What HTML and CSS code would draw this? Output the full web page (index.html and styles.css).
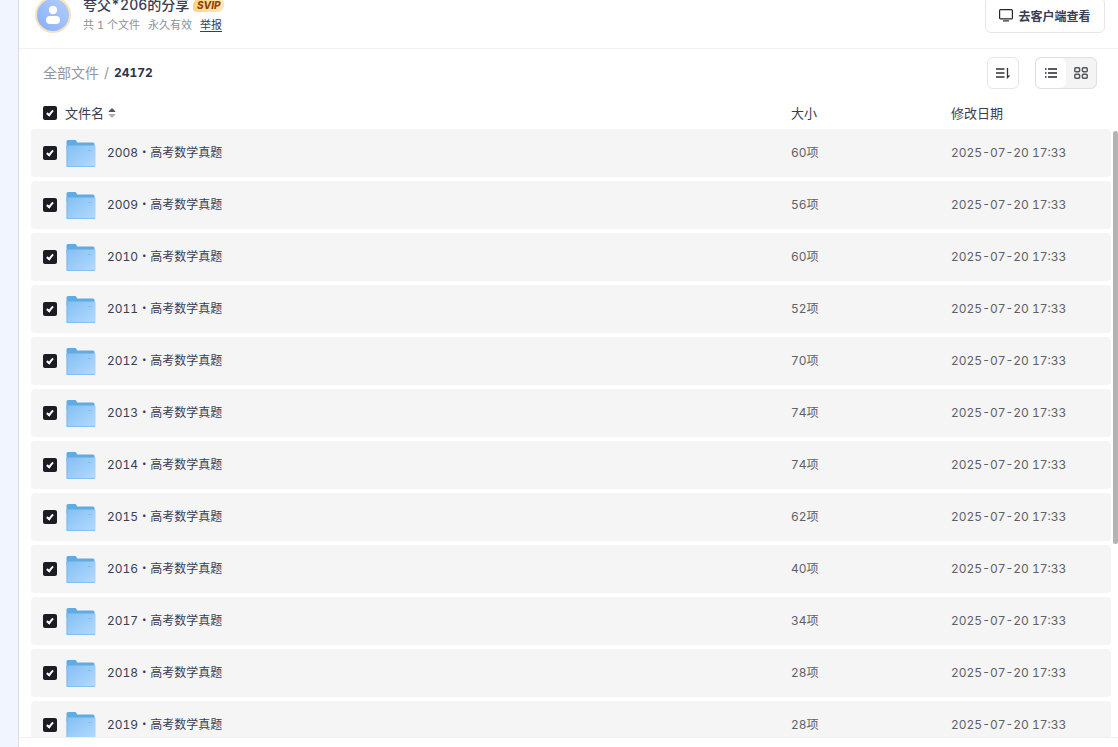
FILE: index.html
```html
<!DOCTYPE html>
<html lang="zh-CN">
<head>
    <meta charset="UTF-8">
    <meta name="viewport" content="width=device-width, initial-scale=1.0">
    <title>夸父*206的分享</title>
    <link rel="stylesheet" href="styles.css">
</head>
<body>
    <svg class="defs" aria-hidden="true">
        <defs>
            <linearGradient id="folder-front" x1="0" y1="0" x2="1" y2="1">
                <stop offset="0" stop-color="#84bff2"/>
                <stop offset="1" stop-color="#b3daff"/>
            </linearGradient>
            <symbol id="folder" viewBox="0 0 30 28">
                <path d="M.5 2.500Q.5 1 2 1H9Q10 1 10.500 2L11 3.500H27Q28.500 3.500 28.500 5V10H.5Z" fill="#61abe2"/>
                <path d="M.5 7.500Q.5 6.500 1.500 6.500H28.500Q29.500 6.500 29.500 7.500V27Q29.500 28 28.500 28H1.500Q.5 28 .5 27Z" fill="url(#folder-front)"/>
                <path d="M1 7V27.500H29" fill="none" stroke="#6db0e8" stroke-opacity=".6"/>
                <path d="M22 11.500H25.500" stroke="#86bdec"/>
            </symbol>
        </defs>
    </svg>
    <div class="page">
        <header class="header">
            <svg class="avatar" viewBox="0 0 36 36">
                <defs>
                    <linearGradient id="avatar-bg" x1="0" y1="1" x2="1" y2="0">
                        <stop offset="0" stop-color="#86adfa"/>
                        <stop offset="1" stop-color="#b6cffb"/>
                    </linearGradient>
                </defs>
                <circle cx="18" cy="18" r="17" fill="url(#avatar-bg)" stroke="#f7e2bd" stroke-width="2"/>
                <circle cx="18" cy="13" r="4.200" fill="#fff"/>
                <rect x="11" y="19" width="14" height="8" rx="4" fill="#fff"/>
            </svg>
            <div class="share">
                <div class="share-title">夸父*206的分享 <span class="svip">SVIP</span></div>
                <div class="share-info">
                    <span>共 1 个文件</span>
                    <span>永久有效</span>
                    <a href="#">举报</a>
                </div>
            </div>
            <button class="client-btn" type="button">
                <svg width="14" height="14" viewBox="0 0 14 14" fill="none" stroke="#25262d" stroke-width="1.200">
                    <rect x=".6" y="1.600" width="12.800" height="9.300" rx="1"/>
                    <path d="M4 12.900H10"/>
                </svg>
                去客户端查看
            </button>
        </header>
        <div class="toolbar">
            <nav class="crumbs">
                <a href="#">全部文件</a>
                <span class="slash">/</span>
                <strong>24172</strong>
            </nav>
            <button class="sort-btn" type="button" aria-label="排序">
                <svg width="14" height="12" viewBox="0 0 14 12" fill="none" stroke="#333" stroke-width="1.300">
                    <path d="M0 2H8.500M0 6H8.500M0 10H8.500M11.500 1V10.500L13.500 8.500"/>
                </svg>
            </button>
            <div class="views">
                <button class="view active" type="button" aria-label="列表">
                    <svg width="12" height="10" viewBox="0 0 12 10" fill="none" stroke="#25262d" stroke-width="1.300">
                        <path d="M0 1H1.500M3 1H12M0 5H1.500M3 5H12M0 9H1.500M3 9H12"/>
                    </svg>
                </button>
                <button class="view" type="button" aria-label="网格">
                    <svg width="14" height="12" viewBox="0 0 14 12" fill="none" stroke="#55565c" stroke-width="1.500">
                        <rect x=".8" y=".8" width="4.800" height="4" rx="1"/>
                        <rect x="8.400" y=".8" width="4.800" height="4" rx="1"/>
                        <rect x=".8" y="7.200" width="4.800" height="4" rx="1"/>
                        <rect x="8.400" y="7.200" width="4.800" height="4" rx="1"/>
                    </svg>
                </button>
            </div>
        </div>
        <div class="list">
            <table class="files">
                <thead>
                    <tr>
                        <th class="name">
                            <input type="checkbox" id="all" checked>
                            <label for="all">文件名</label>
                            <svg class="sorter" width="8" height="10" viewBox="0 0 8 10">
                                <path d="M1 4Q0 4 1 3L3.400 .5Q4 0 4.600 .5L7 3Q8 4 7 4Z" fill="#55565c"/>
                                <path d="M1 6Q0 6 1 7L3.400 9.500Q4 10 4.600 9.500L7 7Q8 6 7 6Z" fill="#b0b1b5"/>
                            </svg>
                        </th>
                        <th class="size">大小</th>
                        <th class="date">修改日期</th>
                    </tr>
                </thead>
                <tbody id="rows"></tbody>
            </table>
            <div class="scroll-thumb"></div>
        </div>
        <footer class="footer"></footer>
    </div>
    <script>
        const counts = [60, 56, 60, 52, 70, 74, 74, 62, 40, 34, 28, 28];
        const rows = document.getElementById('rows');

        // 从 2008 年开始，每年一个文件夹
        counts.forEach((count, i) => {
            const year = 2008 + i;
            const row = document.createElement('tr');
            row.innerHTML = `
                <td class="name">
                    <input type="checkbox" id="f${year}" checked>
                    <svg class="folder"><use href="#folder"/></svg>
                    <label for="f${year}">${year}・高考数学真题</label>
                </td>
                <td class="size">${count}项</td>
                <td class="date">2025-07-20 17:33</td>
            `;
            rows.appendChild(row);
        });
    </script>
</body>
</html>
```
FILE: styles.css
```css
* {
    box-sizing: border-box;
}

body {
    margin: 0;
    height: 100vh;
    overflow: hidden;
    display: flex;
    font-family: Inter, "Noto Sans CJK SC", sans-serif;
    font-size: 12px;
    line-height: 18px;
    font-variant-numeric: tabular-nums;
    color: #3b3d52;
    background-color: #f1f5ff;
}

button {
    font-family: inherit;
    cursor: pointer;
    display: flex;
    align-items: center;
    justify-content: center;
    padding: 0;
    background-color: #fff;
    border: 1px solid #e5e6e8;
    border-radius: 6px;
}

.defs {
    position: absolute;
    width: 0;
    height: 0;
}

.page {
    flex: 1;
    min-width: 0;
    margin-top: -18px;
    margin-left: 18px;
    border-left: 1px solid #dcdde0;
    background-color: #fff;
    display: flex;
    flex-direction: column;
}

.header {
    height: 67px;
    flex: none;
    display: flex;
    align-items: center;
    padding: 0 13px 0 16px;
    border-bottom: 1px solid #f2f2f3;
}

.avatar {
    width: 36px;
    height: 36px;
}

.share {
    flex: 1;
    margin-left: 12px;
}

.share-title {
    display: flex;
    align-items: center;
    gap: 4px;
    font-size: 14px;
    line-height: 20px;
    font-weight: 500;
}

.svip {
    width: 31px;
    height: 13px;
    border-radius: 6px 4px 6px 4px;
    background: linear-gradient(90deg, #ffd288, #ffe7bd);
    color: #8f4708;
    font-size: 10px;
    line-height: 13px;
    font-weight: 800;
    font-style: italic;
    text-align: center;
}

.share-info {
    display: flex;
    gap: 8px;
    font-size: 11px;
    line-height: 20px;
    color: #8f909a;
}

.share-info a {
    color: #3b3d52;
    text-decoration: underline;
    text-underline-offset: 2px;
}

.client-btn {
    width: 120px;
    height: 36px;
    gap: 5px;
    font-size: 12px;
    line-height: normal;
    font-weight: 700;
    color: #3b3d52;
}

.toolbar {
    flex: none;
    height: 48px;
    display: flex;
    align-items: center;
    padding: 0 21px 0 24px;
}

.crumbs {
    flex: 1;
    display: flex;
    align-items: center;
    gap: 5px;
    font-size: 14px;
    line-height: 18px;
    color: #94959c;
}

.crumbs a {
    color: inherit;
    text-decoration: none;
}

.crumbs strong {
    font-size: 12px;
    font-weight: 700;
    color: #30324a;
}

.sort-btn {
    width: 32px;
    height: 32px;
    margin-right: 16px;
}

.views {
    display: flex;
    width: 62px;
    height: 32px;
    border: 1px solid #dedfe1;
    border-radius: 6px;
    overflow: hidden;
    background-color: #f4f4f5;
}

.view {
    flex: 1;
    border: none;
    background-color: transparent;
}

.view.active {
    background-color: #fff;
}

.list {
    position: relative;
    flex: 1;
    min-height: 0;
    display: flex;
    padding: 0 7px 0 12px;
}

.files {
    flex: 1;
    display: flex;
    flex-direction: column;
    min-height: 0;
}

thead,
tbody {
    display: block;
}

tbody {
    flex: 1;
    min-height: 0;
    overflow: hidden;
}

tr {
    display: flex;
    align-items: center;
}

thead tr {
    height: 32px;
    font-size: 13px;
}

tbody tr {
    height: 48px;
    margin-bottom: 4px;
    border-radius: 4px;
    background-color: #f5f5f5;
}

th,
td {
    padding: 0;
    text-align: left;
    font-weight: 400;
}

.name {
    flex: 1;
    display: flex;
    align-items: center;
    padding-left: 12px;
}

.size,
.date {
    width: 160px;
}

td.size,
td.date {
    color: #606166;
}

input[type="checkbox"] {
    appearance: none;
    width: 14px;
    height: 14px;
    margin: 0 8px 0 0;
    border-radius: 2px;
    background-color: #1c1c24;
    display: flex;
    align-items: center;
    justify-content: center;
}

input[type="checkbox"]:checked::before {
    content: "";
    box-sizing: border-box;
    width: 4px;
    height: 7px;
    margin-bottom: 2px;
    border: solid #fff;
    border-width: 0 2px 2px 0;
    transform: rotate(40deg);
}

.sorter {
    margin-left: 4px;
}

.folder {
    width: 30px;
    height: 28px;
    margin: 0 11px 0 1px;
}

.scroll-thumb {
    position: absolute;
    top: 34px;
    right: 0;
    width: 5px;
    height: calc((100% - 32px) * 0.68);
    border-radius: 3px;
    background-color: #b3b3b5;
}

.footer {
    flex: none;
    height: 10px;
    border-top: 1px solid #f0f0f1;
}
```
